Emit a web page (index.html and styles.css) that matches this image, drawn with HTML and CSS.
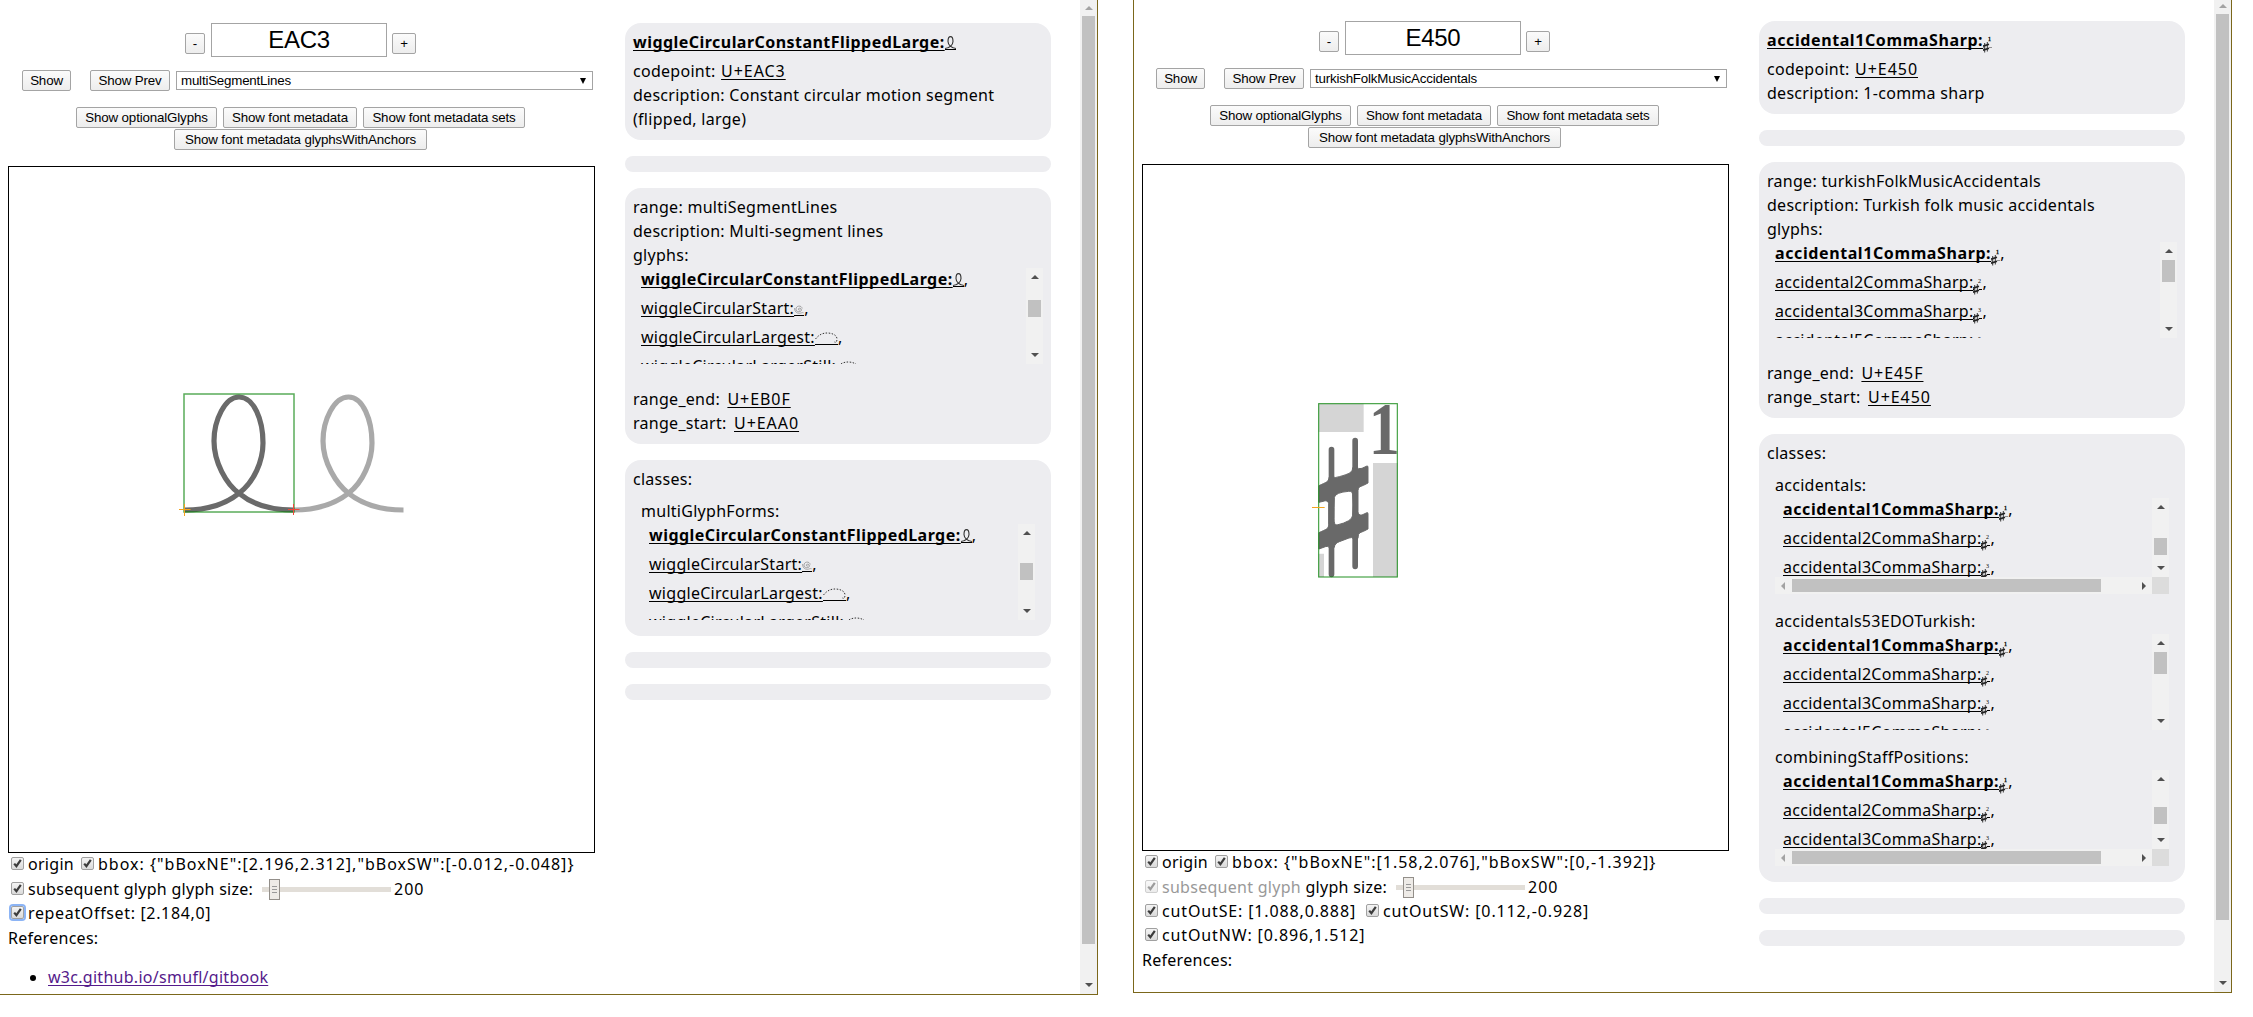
FILE: index.html
```html
<!DOCTYPE html>
<html lang="en">
<head>
<meta charset="utf-8">
<title>SMuFL glyph browser</title>
<link rel="stylesheet" href="styles.css">
</head>
<body>
<svg class="defs" aria-hidden="true">
  <symbol id="check" viewBox="0 0 13 13"><path d="M3.2 6.6 5.4 9.2 9.8 2.8" fill="none" stroke="#3c3c3c" stroke-width="2.2"/></symbol>
  <symbol id="loop" viewBox="0 0 11 14"><path d="M0 12.5C5 12.5 8 8 8 5.5C8 2.5 7 .6 5.5.6S3 2.5 3 5.5C3 8 6 12.5 11 12.5" fill="none" stroke="#333" stroke-width="1.1"/><path d="M0 13.5H11" stroke="#000"/></symbol>
  <symbol id="spiral" viewBox="0 0 10 14"><path d="M6.3 7.5C6 8.500 4.300 8.400 4.300 7.100C4.300 5.800 7.300 5.600 7.500 7.800C7.500 10.500 2.100 10.400 2 7.200C2 3.300 7.600 3 8.200 6.500M.6 6C.3 9 2.500 11.500 5.500 11.300C7.200 11.200 8 10.300 9.500 10.700" fill="none" stroke="#777" stroke-width=".6"/><path d="M0 13.500H10" stroke="#000"/></symbol>
  <symbol id="arc" viewBox="0 0 23 14"><path d="M.5 8C4 3.500 8 2 12 2C17 2 22 4 22 8C22 10.500 21 12 19.500 11" fill="none" stroke="#333" stroke-dasharray="1.500 1.500"/><path d="M0 13.500H23" stroke="#000"/></symbol>
  <symbol id="sharp" viewBox="0 0 9 18"><path d="M1.700 8V17.500M4.300 7V16.500" stroke="#222" stroke-width=".9"/><path d="M0 11.200 6 9.200M0 15.200 6 13.200" stroke="#222" stroke-width="1.700"/><path d="M0 12.500H1M6 12.500H9" stroke="#000"/></symbol>
  <symbol id="up" viewBox="0 0 8 4"><path d="M0 4 4 0 8 4Z" fill="currentColor"/></symbol>
  <symbol id="down" viewBox="0 0 8 4"><path d="M0 0 4 4 8 0Z" fill="currentColor"/></symbol>
  <symbol id="left" viewBox="0 0 4 8"><path d="M4 0 0 4 4 8Z" fill="currentColor"/></symbol>
  <symbol id="right" viewBox="0 0 4 8"><path d="M0 0 4 4 0 8Z" fill="currentColor"/></symbol>
</svg>

<section class="frame frame-a">
  <div class="controls">
    <div class="row stepper"><button class="btn minus">-</button><div class="code">EAC3</div><button class="btn plus">+</button></div>
    <div class="row ranges"><button class="btn show">Show</button><button class="btn prev">Show Prev</button><div class="select"><span>multiSegmentLines</span><i class="caret"></i></div></div>
    <div class="row meta"><button class="btn w141">Show optionalGlyphs</button><button class="btn w134">Show font metadata</button><button class="btn w162">Show font metadata sets</button></div>
    <div class="row anchors"><button class="btn w253">Show font metadata glyphsWithAnchors</button></div>
    <svg class="canvas" viewBox="0 0 585 685">
      <g fill="none" stroke-width="5.200">
        <path stroke="#a9a9a9" d="M285 343C307 343 326 337 339.800 326C354 315 363 294 363 276C363 253 354 230 339.500 230C325 230 314 253 314 274C314 295 327 317 339.800 326.500C353 337 372 343 394.500 343"/>
        <path stroke="#6a6a6a" d="M176 343C198 343 217 337 230.300 326C245 315 254 294 254 276C254 253 245 230 230 230C216 230 205 253 205 274C205 295 217 317 230.300 326.500C243 337 263 343 285 343"/>
      </g>
      <rect x="175" y="227" width="110" height="118" fill="none" stroke="#008000" stroke-opacity=".65" stroke-width="1.500"/>
      <path d="M170 342.500H181.500M175.500 337V349" stroke="#f5a21b"/>
      <path d="M279 342.500H290.500M284.500 337V348" stroke="#f04a3c"/>
    </svg>
    <div class="line"><i class="cb"><svg><use href="#check"/></svg></i><span class="sp">origin</span><i class="cb second"><svg><use href="#check"/></svg></i><span class="num">bbox: {"bBoxNE":[2.196,2.312],"bBoxSW":[-0.012,-0.048]}</span></div>
    <div class="line tall"><i class="cb"><svg><use href="#check"/></svg></i><span class="size-label">subsequent glyph glyph size:</span><div class="slider"><i class="thumb"></i></div><span class="num">200</span></div>
    <div class="line"><i class="cb focus"><svg><use href="#check"/></svg></i><span class="offset">repeatOffset: [2.184,0]</span></div>
    <div class="line">References:</div>
    <ul class="refs"><li><a href="#gitbook">w3c.github.io/smufl/gitbook</a></li></ul>
  </div>
  <div class="info">
    <div class="card">
      <div class="item"><a class="b">wiggleCircularConstantFlippedLarge:</a><svg class="g11"><use href="#loop"/></svg></div>
      <div>codepoint: <a class="cp">U+EAC3</a></div>
      <div>description: Constant circular motion segment (flipped, large)</div>
    </div>
    <div class="card empty"></div>
    <div class="card">
      <div>range: multiSegmentLines</div><div>description: Multi-segment lines</div><div>glyphs:</div>
      <div class="list">
        <div class="items">
          <div class="item"><a class="b">wiggleCircularConstantFlippedLarge:</a><svg class="g11"><use href="#loop"/></svg>,</div>
          <div class="item"><a>wiggleCircularStart:</a><svg class="g10"><use href="#spiral"/></svg>,</div>
          <div class="item"><a>wiggleCircularLargest:</a><svg class="g23"><use href="#arc"/></svg>,</div>
          <div class="item"><a>wiggleCircularLargerStill:</a><svg class="g23"><use href="#arc"/></svg>,</div>
        </div>
        <div class="vbar"><svg class="av"><use href="#up"/></svg><i class="track"><i class="knob" style="margin-top:15px;height:17px"></i></i><svg class="av"><use href="#down"/></svg></div>
      </div>
      <div class="gap">range_end: <a class="cp">U+EB0F</a></div>
      <div>range_start: <a class="cp">U+EAA0</a></div>
    </div>
    <div class="card">
      <div>classes:</div>
      <div class="class">
        <div>multiGlyphForms:</div>
        <div class="list">
          <div class="items">
            <div class="item"><a class="b">wiggleCircularConstantFlippedLarge:</a><svg class="g11"><use href="#loop"/></svg>,</div>
            <div class="item"><a>wiggleCircularStart:</a><svg class="g10"><use href="#spiral"/></svg>,</div>
            <div class="item"><a>wiggleCircularLargest:</a><svg class="g23"><use href="#arc"/></svg>,</div>
            <div class="item"><a>wiggleCircularLargerStill:</a><svg class="g23"><use href="#arc"/></svg>,</div>
          </div>
          <div class="vbar"><svg class="av"><use href="#up"/></svg><i class="track"><i class="knob" style="margin-top:22px;height:17px"></i></i><svg class="av"><use href="#down"/></svg></div>
        </div>
      </div>
    </div>
    <div class="card empty"></div>
    <div class="card empty"></div>
  </div>
  <div class="vbar page"><svg class="av dim"><use href="#up"/></svg><i class="track"><i class="knob" style="height:928px"></i></i><svg class="av"><use href="#down"/></svg></div>
</section>

<section class="frame frame-b">
  <div class="controls">
    <div class="row stepper"><button class="btn minus">-</button><div class="code">E450</div><button class="btn plus">+</button></div>
    <div class="row ranges"><button class="btn show">Show</button><button class="btn prev">Show Prev</button><div class="select"><span>turkishFolkMusicAccidentals</span><i class="caret"></i></div></div>
    <div class="row meta"><button class="btn w141">Show optionalGlyphs</button><button class="btn w134">Show font metadata</button><button class="btn w162">Show font metadata sets</button></div>
    <div class="row anchors"><button class="btn w253">Show font metadata glyphsWithAnchors</button></div>
    <svg class="canvas" viewBox="0 0 585 685">
      <g transform="translate(147 225) scale(.33333)">
        <path fill="#d5d5d5" d="M86 41H221V126H86ZM249 219H323V561H249ZM86 491H102V561H86Z"/>
        <g stroke="#696969" stroke-linecap="round" fill="none"><path stroke-width="17" d="M124.500 179V553M195.500 152V529"/></g>
        <path fill="#696969" stroke="#696969" stroke-width="3" stroke-linejoin="round" fill-rule="evenodd" d="M87 287C110 276 116 276 117 262H133Q133 264 148 260C180 251 187 247 188 233H204Q204 238 216 235L231 228Q234 227 234 232V279Q220 287 210 290Q204 293 204 302V364Q204 377 216 375L231 368Q234 367 234 372V417Q220 425 210 428Q204 431 204 445H188Q187 441 177 444L148 455Q134 460 133 472H116Q116 467 106 470L87 477V428C110 417 116 417 116 403V340Q113 330 103 333L87 337ZM133 322Q132 350 132 385Q131 405 141 405Q187 394 188 376Q191 345 188 314Q187 302 176 304Q137 307 133 322Z"/>
        <text class="one" transform="translate(236 193) scale(.83 1)">1</text>
        <rect x="86" y="41" width="236" height="520" fill="none" stroke="#008000" stroke-opacity=".75" stroke-width="3.500"/>
        <path d="M66 352.500H104" stroke="#f5a21b" stroke-width="3"/>
      </g>
    </svg>
    <div class="line"><i class="cb"><svg><use href="#check"/></svg></i><span class="sp">origin</span><i class="cb second"><svg><use href="#check"/></svg></i><span class="num">bbox: {"bBoxNE":[1.58,2.076],"bBoxSW":[0,-1.392]}</span></div>
    <div class="line tall"><i class="cb off"><svg><use href="#check"/></svg></i><span class="size-label"><span class="muted">subsequent glyph</span> glyph size:</span><div class="slider"><i class="thumb"></i></div><span class="num">200</span></div>
    <div class="line"><i class="cb"><svg><use href="#check"/></svg></i><span class="num cut">cutOutSE: [1.088,0.888]</span><i class="cb second"><svg><use href="#check"/></svg></i><span class="num cut">cutOutSW: [0.112,-0.928]</span></div>
    <div class="line"><i class="cb"><svg><use href="#check"/></svg></i><span class="num cut">cutOutNW: [0.896,1.512]</span></div>
    <div class="line">References:</div>
  </div>
  <div class="info">
    <div class="card">
      <div class="item"><a class="b s">accidental1CommaSharp:</a><svg class="g9 heavy"><use href="#sharp"/><text x="5" y="6">1</text></svg></div>
      <div>codepoint: <a class="cp">U+E450</a></div>
      <div>description: 1-comma sharp</div>
    </div>
    <div class="card empty"></div>
    <div class="card">
      <div>range: turkishFolkMusicAccidentals</div><div>description: Turkish folk music accidentals</div><div>glyphs:</div>
      <div class="list">
        <div class="items">
          <div class="item"><a class="b s">accidental1CommaSharp:</a><svg class="g9 heavy"><use href="#sharp"/><text x="5" y="6">1</text></svg>,</div>
          <div class="item"><a>accidental2CommaSharp:</a><svg class="g9"><use href="#sharp"/><text x="5" y="6">2</text></svg>,</div>
          <div class="item"><a>accidental3CommaSharp:</a><svg class="g9"><use href="#sharp"/><text x="5" y="6">3</text></svg>,</div>
          <div class="item"><a>accidental5CommaSharp:</a><svg class="g9"><use href="#sharp"/><text x="5" y="6">5</text></svg>,</div>
        </div>
        <div class="vbar"><svg class="av"><use href="#up"/></svg><i class="track"><i class="knob" style="margin-top:1px;height:22px"></i></i><svg class="av"><use href="#down"/></svg></div>
      </div>
      <div class="gap">range_end: <a class="cp">U+E45F</a></div>
      <div>range_start: <a class="cp">U+E450</a></div>
    </div>
    <div class="card">
      <div>classes:</div>
      <div class="class">
        <div>accidentals:</div>
        <div class="list both">
          <div class="items">
            <div class="item"><a class="b s">accidental1CommaSharp:</a><svg class="g9 heavy"><use href="#sharp"/><text x="5" y="6">1</text></svg>,</div>
            <div class="item"><a>accidental2CommaSharp:</a><svg class="g9"><use href="#sharp"/><text x="5" y="6">2</text></svg>,</div>
            <div class="item"><a>accidental3CommaSharp:</a><svg class="g9"><use href="#sharp"/><text x="5" y="6">3</text></svg>,</div>
          </div>
          <div class="vbar"><svg class="av"><use href="#up"/></svg><i class="track"><i class="knob" style="margin-top:23px;height:17px"></i></i><svg class="av"><use href="#down"/></svg></div>
          <div class="hbar"><svg class="ah dim"><use href="#left"/></svg><i class="hknob"></i><svg class="ah"><use href="#right"/></svg></div>
          <div class="corner"></div>
        </div>
      </div>
      <div class="class">
        <div>accidentals53EDOTurkish:</div>
        <div class="list">
          <div class="items">
            <div class="item"><a class="b s">accidental1CommaSharp:</a><svg class="g9 heavy"><use href="#sharp"/><text x="5" y="6">1</text></svg>,</div>
            <div class="item"><a>accidental2CommaSharp:</a><svg class="g9"><use href="#sharp"/><text x="5" y="6">2</text></svg>,</div>
            <div class="item"><a>accidental3CommaSharp:</a><svg class="g9"><use href="#sharp"/><text x="5" y="6">3</text></svg>,</div>
            <div class="item"><a>accidental5CommaSharp:</a><svg class="g9"><use href="#sharp"/><text x="5" y="6">5</text></svg>,</div>
          </div>
          <div class="vbar"><svg class="av"><use href="#up"/></svg><i class="track"><i class="knob" style="margin-top:1px;height:22px"></i></i><svg class="av"><use href="#down"/></svg></div>
        </div>
      </div>
      <div class="class">
        <div>combiningStaffPositions:</div>
        <div class="list both">
          <div class="items">
            <div class="item"><a class="b s">accidental1CommaSharp:</a><svg class="g9 heavy"><use href="#sharp"/><text x="5" y="6">1</text></svg>,</div>
            <div class="item"><a>accidental2CommaSharp:</a><svg class="g9"><use href="#sharp"/><text x="5" y="6">2</text></svg>,</div>
            <div class="item"><a>accidental3CommaSharp:</a><svg class="g9"><use href="#sharp"/><text x="5" y="6">3</text></svg>,</div>
          </div>
          <div class="vbar"><svg class="av"><use href="#up"/></svg><i class="track"><i class="knob" style="margin-top:20px;height:17px"></i></i><svg class="av"><use href="#down"/></svg></div>
          <div class="hbar"><svg class="ah dim"><use href="#left"/></svg><i class="hknob"></i><svg class="ah"><use href="#right"/></svg></div>
          <div class="corner"></div>
        </div>
      </div>
    </div>
    <div class="card empty"></div>
    <div class="card empty"></div>
  </div>
  <div class="vbar page"><svg class="av dim"><use href="#up"/></svg><i class="track"><i class="knob" style="height:906px"></i></i><svg class="av"><use href="#down"/></svg></div>
</section>
</body>
</html>
```
FILE: styles.css
```css
* { box-sizing: border-box; }
body {
  margin: 0;
  display: flex;
  align-items: flex-start;
  gap: 35px;
  height: 1017px;
  overflow: hidden;
  background: #fff;
  color: #000;
  font: 16px/24px "Noto Sans", sans-serif;
  letter-spacing: .28px;
}
.defs { position: absolute; width: 0; height: 0; }
svg { display: block; }

/* Frames: controls, glyph data, page scrollbar */
.frame { flex: none; display: flex; border: solid #7b671b; }
.frame-a { width: 1098px; height: 995px; border-width: 0 1px 1px 0; padding-left: 8px; }
.frame-b { width: 1099px; height: 993px; border-width: 0 1px 1px; padding-left: 8px; }
.controls { width: 587px; padding-top: 23px; margin-right: 30px; }
.info { width: 426px; padding-top: 23px; display: flex; flex-direction: column; gap: 16px; }
.frame-b .controls, .frame-b .info { padding-top: 21px; }

/* Controls */
.row { display: flex; align-items: flex-start; font-family: "Liberation Sans", Arial, sans-serif; letter-spacing: 0; }
.btn {
  height: 21px;
  padding: 0;
  border: 1px solid #a4a4a4;
  border-radius: 2px;
  background: linear-gradient(#fbfbfb, #ededed);
  color: #000;
  font: 13.33px/17px "Liberation Sans", Arial, sans-serif;
  letter-spacing: -.15px;
  white-space: nowrap;
}
.stepper { padding-left: 177px; height: 47px; }
.stepper .btn { margin-top: 10px; }
.minus { width: 20px; }
.plus { width: 24px; }
.code { width: 176px; height: 34px; margin: 0 5px 0 6px; border: 1px solid #a4a4a4; text-align: center; font-size: 24px; line-height: 31px; letter-spacing: -.3px; }
.ranges { padding-left: 14px; height: 37px; }
.show { width: 49px; margin-right: 19px; }
.prev { width: 80px; margin-right: 6px; }
.select { display: flex; align-items: center; justify-content: space-between; width: 417px; height: 19px; margin-top: 1px; padding: 0 6px 0 4px; border: 1px solid #a4a4a4; font-size: 13.33px; line-height: 17px; letter-spacing: -.2px; }
.caret { border: solid transparent; border-width: 6px 3.5px 0; border-top-color: #000; }
.meta { padding-left: 68px; height: 22px; gap: 6px; }
.w141 { width: 141px; }
.w134 { width: 134px; }
.w162 { width: 162px; }
.anchors { padding-left: 166px; height: 37px; }
.w253 { width: 253px; }
.canvas { width: 587px; height: 687px; border: 1px solid #000; }
.one { font: bold 225px "Liberation Serif", serif; fill: #696969; letter-spacing: 0; }

/* Option lines */
.line { display: flex; align-items: center; height: 24px; line-height: 22px; white-space: pre; }
.line.tall { height: 25px; }
.cb {
  flex: none;
  width: 13px;
  height: 13px;
  margin: -3px 4px 0 3px;
  border: 1px solid #a0a0a0;
  border-radius: 2px;
  background: linear-gradient(#f4f4f4, #dadada);
}
.line > span { margin-top: -2px; }
.cb svg { width: 13px; height: 13px; margin: -1px; }
.cb.second { margin-left: 10px; }
.sp { width: 43px; }
.cb.focus { box-shadow: 0 0 0 2px #8cb4f5; }
.cb.off { opacity: .5; }
.muted { color: #999; }
.num { letter-spacing: 1px; }
.cut { letter-spacing: .86px; }
.offset { letter-spacing: .65px; }
.size-label { width: 234px; }
.slider { width: 129px; height: 5px; margin-right: 3px; background: #e2ded8; display: flex; align-items: center; }
.thumb { width: 11px; height: 21px; margin-left: 7px; border: 1px solid #938f8a; background: linear-gradient(#999 0 0) center / 5px 1px no-repeat, linear-gradient(#999 0 0) center calc(50% - 3px) / 5px 1px no-repeat, linear-gradient(#999 0 0) center calc(50% + 3px) / 5px 1px no-repeat, #eeebe7; }
.refs { margin: 15px 0 0; padding-left: 40px; }
.refs a { color: #551a8b; }

/* Glyph data cards */
.card { padding: 7px 8px 9px; border-radius: 16px; background: #ededf0; }
.card.empty { height: 16px; padding: 0; border-radius: 8px; }
a { color: #000; text-decoration: underline; text-decoration-skip-ink: none; text-decoration-thickness: 1px; text-underline-offset: 2px; }
.b { font-weight: 700; letter-spacing: .46px; }
.b.s { letter-spacing: .6px; }
.cp { margin-left: 3px; letter-spacing: .95px; }
.card:first-child .cp { margin-left: 1px; }
.item { display: flex; height: 29px; line-height: 24px; white-space: nowrap; }
.item svg { flex: none; height: 14px; margin-top: 6px; overflow: visible; }
.item .g11 { width: 11px; }
.item .g10 { width: 10px; }
.item .g23 { width: 23px; }
.item .g9 { width: 9px; height: 18px; margin-top: 7px; }
.g9 text { font: 6px "Liberation Serif", serif; letter-spacing: 0; }
.heavy { stroke: #222; stroke-width: .4px; }
.gap { margin-top: 23px; }
.class { margin: 8px 8px 0; }
.class + .class { margin-top: 15px; }
.class:last-child { padding-bottom: 7px; }
.list { display: grid; grid-template-columns: 1fr 17px; grid-template-rows: 96px; width: 410px; height: 96px; margin-top: 1px; overflow: hidden; }
.class .list { width: 394px; }
.list.both { grid-template-rows: 79px 17px; }
.items { padding-left: 8px; overflow: hidden; }
.items .item:first-child { margin-top: -1px; }

/* Scrollbars */
.vbar { display: flex; flex-direction: column; align-items: center; background: #f1f1f1; color: #505050; }
.page { width: 17px; margin-left: auto; }
.track { flex: 1; width: 13px; overflow: hidden; }
.knob { display: block; background: #c1c1c1; }
.av { width: 8px; height: 4px; margin: 7px 0 6px; flex: none; }
.av:last-child { margin: 5px 0 7px; }
.dim { color: #a3a3a3; }
.page .av:first-child { margin: 6px 0; }
.frame-b .page .av:first-child { margin: 4px 0 6px; }
.hbar { display: flex; align-items: center; background: #f1f1f1; color: #505050; }
.ah { width: 4px; height: 8px; margin: 0 7px 0 6px; flex: none; }
.hknob { width: 309px; height: 13px; background: #c1c1c1; margin-right: auto; }
.hbar .ah:last-child { margin-right: 6px; }
.corner { background: #dcdcdc; }
```
